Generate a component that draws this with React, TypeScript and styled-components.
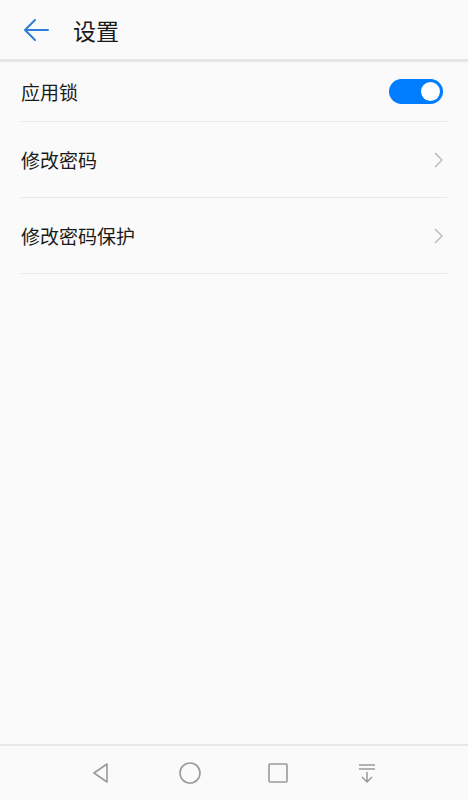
import React from "react";
import styled, { createGlobalStyle } from "styled-components";

const Global = createGlobalStyle`
  html, body { margin: 0; padding: 0; background: #fafafa; }
  body { font-family: Roboto, "Noto Sans CJK SC", sans-serif; }
`;

const Page = styled.div`
  width: 468px;
  height: 800px;
  display: flex;
  flex-direction: column;
  background: #fafafa;
`;

const Header = styled.header`
  height: 59px;
  display: flex;
  align-items: center;
  border-bottom: 3px solid #e6e6e6;
  padding-left: 22px;
  gap: 23px;
  flex-shrink: 0;
`;

const BackButton = styled.div`
  width: 28px;
  height: 28px;
  display: flex;
  align-items: center;
  justify-content: center;
`;

const Title = styled.h1`
  margin: 0;
  font-size: 23px;
  font-weight: 400;
  color: #1a1a1a;
  font-family: "Noto Sans CJK SC", sans-serif;
`;

const List = styled.div`
  flex: 1;
  padding: 0 21px;
`;

const Row = styled.div<{ $h: number }>`
  height: ${(p) => p.$h}px;
  display: flex;
  align-items: center;
  justify-content: space-between;
  border-bottom: 1px solid #e8e8e8;
  box-sizing: border-box;
`;

const Label = styled.span`
  font-size: 19px;
  color: #1a1a1a;
  font-family: "Noto Sans CJK SC", sans-serif;
`;

const Toggle = styled.div`
  width: 54px;
  height: 25px;
  border-radius: 13px;
  background: #007dff;
  position: relative;
  margin-right: 4px;
`;

const Knob = styled.div`
  position: absolute;
  right: 3px;
  top: 3px;
  width: 19px;
  height: 19px;
  border-radius: 50%;
  background: #fff;
`;

const NavBar = styled.nav`
  height: 54px;
  border-top: 2px solid #e8e8e8;
  display: flex;
  align-items: center;
  justify-content: center;
  flex-shrink: 0;
`;

const NavItem = styled.div`
  width: 88.5px;
  display: flex;
  justify-content: center;
`;

const Chevron = () => (
  <svg width="14" height="20" viewBox="0 0 14 20" style={{ marginRight: 2 }}>
    <path d="M4 3 L11 10 L4 17" fill="none" stroke="#bdbdbd" strokeWidth="1.5" />
  </svg>
);

export default function App() {
  return (
    <Page>
      <Global />
      <Header>
        <BackButton>
          <svg width="28" height="24" viewBox="0 0 28 24">
            <path d="M26 12 H3 M13 2 L3 12 L13 22" fill="none" stroke="#2b7fd4" strokeWidth="2" strokeLinecap="round" strokeLinejoin="round" />
          </svg>
        </BackButton>
        <Title>设置</Title>
      </Header>
      <List>
        <Row $h={60}>
          <Label>应用锁</Label>
          <Toggle>
            <Knob />
          </Toggle>
        </Row>
        <Row $h={76}>
          <Label>修改密码</Label>
          <Chevron />
        </Row>
        <Row $h={76}>
          <Label>修改密码保护</Label>
          <Chevron />
        </Row>
      </List>
      <NavBar>
        <NavItem>
          <svg width="22" height="22" viewBox="0 0 22 22">
            <path d="M17 2 L4 11 L17 20 Z" fill="none" stroke="#9a9a9a" strokeWidth="1.6" strokeLinejoin="round" />
          </svg>
        </NavItem>
        <NavItem>
          <svg width="24" height="24" viewBox="0 0 24 24">
            <circle cx="12" cy="12" r="10" fill="none" stroke="#9a9a9a" strokeWidth="1.6" />
          </svg>
        </NavItem>
        <NavItem>
          <svg width="22" height="22" viewBox="0 0 22 22">
            <rect x="2" y="2" width="18" height="18" rx="1" fill="none" stroke="#9a9a9a" strokeWidth="1.6" />
          </svg>
        </NavItem>
        <NavItem>
          <svg width="22" height="22" viewBox="0 0 22 22">
            <path d="M3 3 H19 M3 7 H19 M11 10 V20 M6 15 L11 20 L16 15" fill="none" stroke="#9a9a9a" strokeWidth="1.5" />
          </svg>
        </NavItem>
      </NavBar>
    </Page>
  );
}
